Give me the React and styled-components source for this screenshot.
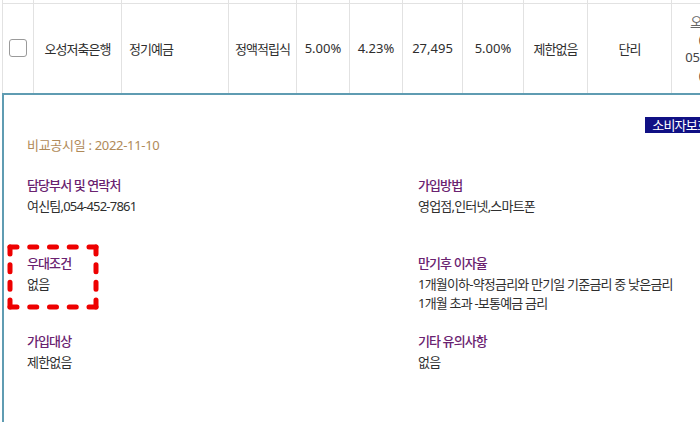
import React from 'react';
import styled, { createGlobalStyle } from 'styled-components';

const GlobalStyle = createGlobalStyle`
  html, body { margin: 0; padding: 0; background: #fff; overflow: hidden; }
  body {
    font-family: "Noto Sans", "Noto Sans CJK KR", sans-serif;
    color: #333;
  }
`;

const Page = styled.div`
  padding-left: 2px;
  width: 781px;
`;

const Table = styled.table`
  border-collapse: collapse;
  table-layout: fixed;
  width: 779px;
  font-size: 13px;
`;

const StubRow = styled.tr`
  height: 3px;
`;

const ProductRow = styled.tr`
  height: 89px;
`;

const StubCell = styled.td`
  border-left: 1px solid #e2e2e2;
  border-right: 1px solid #e2e2e2;
  padding: 0;
  height: 3px;
  font-size: 0;
  line-height: 0;
`;

const Cell = styled.td`
  border: 1px solid #e2e2e2;
  border-bottom: none;
  padding: 0 ${p => (p.$pad != null ? p.$pad : 2)}px;
  text-align: ${p => p.$align || 'center'};
  vertical-align: middle;
  letter-spacing: ${p => (p.$num ? '0' : '-1px')};
  white-space: nowrap;
  overflow: hidden;
  color: #2e2e2e;
`;

const Checkbox = styled.span`
  display: block;
  width: 16px;
  height: 16px;
  margin: 0 auto;
  border: 1px solid #9a9a9a;
  border-radius: 3px;
  background: #fff;
`;

const ContactBlock = styled.div`
  line-height: 18px;
  text-align: center;
  color: #444;
  letter-spacing: 0;
`;

const BankLink = styled.a`
  color: #666;
  text-decoration: underline;
`;

const Panel = styled.div`
  border-top: 2px solid #5f9cb2;
  border-left: 2px solid #5f9cb2;
  height: 360px;
  padding: 22px 0 0 23px;
  width: 754px;
`;

const BadgeRow = styled.div`
  display: flex;
  justify-content: flex-end;
  padding-right: 41px;
`;

const Badge = styled.span`
  background: #101084;
  color: #fff;
  font-size: 13px;
  line-height: 16px;
  height: 16px;
  padding: 0 7px;
  letter-spacing: -0.8px;
`;

const DateLine = styled.div`
  margin-top: 3px;
  font-size: 13px;
  line-height: 18px;
  color: #b08a58;
  letter-spacing: -0.3px;
`;

const InfoGrid = styled.div`
  margin-top: 20px;
  display: grid;
  grid-template-columns: 391px 391px;
  grid-auto-rows: 78px;
`;

const Item = styled.div`
  position: relative;
`;

const ItemTitle = styled.div`
  font-size: 13px;
  line-height: 22px;
  color: #6a2270;
  letter-spacing: -0.9px;
  font-weight: 500;
`;

const ItemValue = styled.div`
  margin-top: 2px;
  font-size: 13px;
  line-height: 17px;
  color: #2e2e2e;
  letter-spacing: -0.8px;
`;

const Highlight = styled.svg`
  position: absolute;
  left: -20px;
  top: -8px;
  pointer-events: none;
  overflow: visible;
`;

const columns = [31, 88, 107, 68, 53, 53, 60, 61, 64, 84, 110];

const items = [
  { title: '담당부서 및 연락처', values: ['여신팀,054-452-7861'] },
  { title: '가입방법', values: ['영업점,인터넷,스마트폰'] },
  { title: '우대조건', values: ['없음'], mark: true },
  {
    title: '만기후 이자율',
    values: ['1개월이하-약정금리와 만기일 기준금리 중 낮은금리', '1개월 초과 -보통예금 금리'],
  },
  { title: '가입대상', values: ['제한없음'] },
  { title: '기타 유의사항', values: ['없음'] },
];

function DashedMark() {
  const dash = { stroke: '#ee0000', strokeWidth: 5, strokeLinecap: 'round', fill: 'none' };
  return (
    <Highlight width="92" height="66" viewBox="0 0 92 66">
      <line x1="3" y1="3" x2="89" y2="3" {...dash} strokeDasharray="7 12.75" />
      <line x1="3" y1="63" x2="89" y2="63" {...dash} strokeDasharray="7 12.75" />
      <line x1="3" y1="3" x2="3" y2="63" {...dash} strokeDasharray="7 10.67" />
      <line x1="89" y1="3" x2="89" y2="63" {...dash} strokeDasharray="7 10.67" />
    </Highlight>
  );
}

export default function App() {
  return (
    <Page>
      <GlobalStyle />
      <Table>
        <colgroup>
          {columns.map((w, i) => (
            <col key={i} style={{ width: w }} />
          ))}
        </colgroup>
        <tbody>
          <StubRow>
            {columns.map((_, i) => (
              <StubCell key={i} />
            ))}
          </StubRow>
          <ProductRow>
            <Cell>
              <Checkbox />
            </Cell>
            <Cell>오성저축은행</Cell>
            <Cell $align="left" $pad={7}>정기예금</Cell>
            <Cell>정액적립식</Cell>
            <Cell $num>5.00%</Cell>
            <Cell $num>4.23%</Cell>
            <Cell $num>27,495</Cell>
            <Cell $num>5.00%</Cell>
            <Cell>제한없음</Cell>
            <Cell>단리</Cell>
            <Cell>
              <ContactBlock>
                <BankLink>오성저축은행</BankLink>
                <br />
                (대출상담)
                <br />
                054-452-7861
                <br />
                (대표번호)
              </ContactBlock>
            </Cell>
          </ProductRow>
        </tbody>
      </Table>
      <Panel>
        <BadgeRow>
          <Badge>소비자보호 공시</Badge>
        </BadgeRow>
        <DateLine>비교공시일 : 2022-11-10</DateLine>
        <InfoGrid>
          {items.map(it => (
            <Item key={it.title}>
              {it.mark && <DashedMark />}
              <ItemTitle>{it.title}</ItemTitle>
              {it.values.map(v => (
                <ItemValue key={v}>{v}</ItemValue>
              ))}
            </Item>
          ))}
        </InfoGrid>
      </Panel>
    </Page>
  );
}
